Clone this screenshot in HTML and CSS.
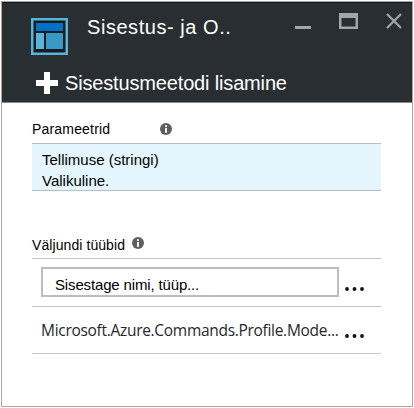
FILE: index.html
```html
<!DOCTYPE html>
<html lang="et">
<head>
<meta charset="utf-8">
<title>Sisestus- ja O..</title>
<link rel="stylesheet" href="styles.css">
</head>
<body>
<main class="window">
  <header class="header">
    <div class="titlebar">
      <svg class="logo" width="38" height="38" viewBox="0 0 38 38">
        <rect x="1" y="1" width="35" height="35" fill="#181c20"/>
        <rect x="1.250" y="1.250" width="34.500" height="34.500" fill="none" stroke="#59b4d9" stroke-width="2.500"/>
        <rect x="5" y="5" width="27" height="8" fill="#0072c6"/>
        <rect x="5" y="15" width="8" height="16" fill="#59b4d9"/>
        <rect x="15" y="15" width="17" height="16" fill="#3999c6"/>
      </svg>
      <h1 class="title">Sisestus- ja O..</h1>
      <svg class="controls" width="112" height="22" viewBox="0 0 112 22">
        <rect x="1" y="16" width="16" height="3" fill="#a3a5a7"/>
        <path d="M45 3h19v16h-19zM47.500 8v8.500h14v-8.500z" fill="#a3a5a7" fill-rule="evenodd"/>
        <path d="M93 4l14 14M107 4l-14 14" stroke="#a3a5a7" stroke-width="2.200"/>
      </svg>
    </div>
    <div class="action">
      <svg width="22" height="22" viewBox="0 0 22 22"><path d="M8 0h6v8h8v6h-8v8h-6v-8h-8v-6h8z" fill="#fff"/></svg>
      <span class="action-text">Sisestusmeetodi lisamine</span>
    </div>
  </header>
  <section class="params">
    <div class="heading"><span class="params-label">Parameetrid</span>
      <svg class="info" width="12" height="12" viewBox="0 0 12 12"><circle cx="6" cy="6" r="6" fill="#5d6063"/><path d="M5 2.300h2v1.700h-2zM5 5h2v4.800h-2z" fill="#fff"/></svg>
    </div>
    <div class="param-row">
      <div class="param-name">Tellimuse (stringi)</div>
      <div class="param-note">Valikuline.</div>
    </div>
  </section>
  <section class="outputs">
    <div class="heading"><span class="outputs-label">Väljundi tüübid</span>
      <svg class="info" width="12" height="12" viewBox="0 0 12 12"><circle cx="6" cy="6" r="6" fill="#5d6063"/><path d="M5 2.300h2v1.700h-2zM5 5h2v4.800h-2z" fill="#fff"/></svg>
    </div>
    <div class="row">
      <div class="field">Sisestage nimi, tüüp...</div>
      <svg class="dots" width="20" height="4" viewBox="0 0 20 4"><circle cx="2" cy="2" r="1.900"/><circle cx="9.500" cy="2" r="1.900"/><circle cx="17" cy="2" r="1.900"/></svg>
    </div>
    <div class="row">
      <div class="type">Microsoft.Azure.Commands.Profile.Mode...</div>
      <svg class="dots" width="20" height="4" viewBox="0 0 20 4"><circle cx="2" cy="2" r="1.900"/><circle cx="9.500" cy="2" r="1.900"/><circle cx="17" cy="2" r="1.900"/></svg>
    </div>
  </section>
</main>
</body>
</html>
```
FILE: styles.css
```css
* { box-sizing: border-box; }
body {
  margin: 0;
  background: #fff;
  color: #000;
  font-family: "Liberation Sans", Arial, sans-serif;
}
.window {
  width: 412px;
  height: 406px;
  margin: 1px;
  border: 1px solid #a5a7a8;
  overflow: hidden;
}
.header {
  height: 101px;
  background: #292e32;
  border-top: 1px solid #14191d;
  border-bottom: 1px solid #858a8c;
  color: #fff;
}
.titlebar {
  display: flex;
  height: 66px;
  padding: 7px 6px 0 29px;
}
.logo { flex: none; margin-top: 8px; }
.controls { flex: none; }
.title {
  flex: 1;
  margin: 5px 0 0 18px;
  font-size: 20px;
  font-weight: 400;
  line-height: 24px;
  letter-spacing: 0.550px;
  white-space: nowrap;
}
.action {
  display: flex;
  align-items: center;
  gap: 7px;
  padding-left: 34px;
  height: 28px;
}
.action-text {
  font-size: 20px;
  line-height: 24px;
  letter-spacing: -0.160px;
  white-space: nowrap;
}
.heading {
  display: flex;
  height: 23px;
  align-items: center;
  font-size: 14px;
  line-height: 18px;
}
.params, .outputs { width: 349px; margin-left: 30px; }
.params { padding-top: 17px; }
.params-label { width: 128px; margin-bottom: 5px; letter-spacing: 0.180px; }
.params .info { margin-bottom: 5px; }
.param-row {
  height: 48px;
  padding: 5px 0 0 10px;
  background: #e4f5fd;
  border-top: 1px solid #bbbdbe;
  border-bottom: 1px solid #bbbdbe;
  font-size: 15px;
  line-height: 21px;
}
.outputs { padding-top: 44px; }
.outputs-label { margin: 0 7px 4px 0; letter-spacing: 0.080px; }
.outputs .info { margin-bottom: 7px; }
.row {
  display: flex;
  align-items: center;
  height: 47.500px;
  padding-left: 9px;
  border-top: 1px solid #c3c4c5;
}
.row:last-child { border-bottom: 1px solid #c3c4c5; height: 48px; }
.field {
  width: 298px;
  height: 30px;
  padding-left: 12px;
  border: 2px solid #bbbdbe;
  font-size: 15px;
  line-height: 31px;
  letter-spacing: -0.150px;
}
.type {
  width: 298px;
  font-family: "Open Sans", "Noto Sans", sans-serif;
  font-size: 15.500px;
  letter-spacing: -0.300px;
  line-height: 24px;
  color: #25282b;
  white-space: nowrap;
}
.dots { margin: 13px 0 0 6px; fill: #111; }
```
